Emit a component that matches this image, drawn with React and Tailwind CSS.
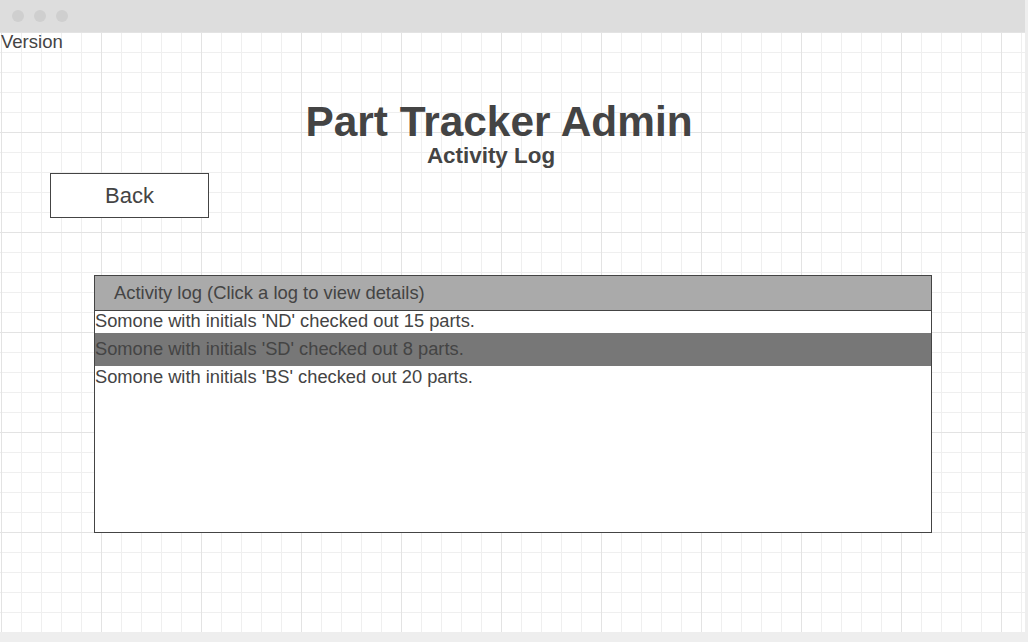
export default function App() {
  const rows = [
    { text: "Somone with initials 'ND' checked out 15 parts.", sel: false, h: "h-[22px] pt-[0px]" },
    { text: "Somone with initials 'SD' checked out 8 parts.", sel: true, h: "h-[33px] pt-[6px]" },
    { text: "Somone with initials 'BS' checked out 20 parts.", sel: false, h: "h-[22px] pt-[1px]" },
  ];
  return (
    <div className="w-[1028px] h-[642px] bg-[#eeeeee] overflow-hidden font-['Liberation_Sans',Arial,sans-serif] text-[#444444]">
      <div className="w-[1025px] h-[32px] bg-[#dddddd] flex items-center gap-[10px] pl-[12px]">
        <div className="w-[12px] h-[12px] rounded-full bg-[#cfcfcf]" />
        <div className="w-[12px] h-[12px] rounded-full bg-[#cfcfcf]" />
        <div className="w-[12px] h-[12px] rounded-full bg-[#cfcfcf]" />
      </div>
      <div className="w-[1025px] h-[600px] bg-white bg-[linear-gradient(to_right,#e3e3e3_1px,transparent_1px),linear-gradient(to_bottom,#e3e3e3_1px,transparent_1px),linear-gradient(to_right,#efefef_1px,transparent_1px),linear-gradient(to_bottom,#efefef_1px,transparent_1px)] [background-size:100px_100px,100px_100px,20px_20px,20px_20px] [background-position:1px_0,0_0,1px_0,0_0] flex flex-col">
        <div className="pl-[1px] pt-[1px] text-[18.5px] leading-[18px] h-[19px]">Version</div>
        <div className="mt-[49px] flex flex-col">
          <div className="text-center w-[998px] text-[42.4px] leading-[44px] font-bold">Part Tracker Admin</div>
          <div className="text-center w-[982px] text-[22.4px] leading-[22px] font-bold mt-[1px]">Activity Log</div>
        </div>
        <div className="ml-[50px] mt-[6px] w-[159px] h-[45px] border border-[#444444] bg-white flex items-center justify-center text-[22px]">
          Back
        </div>
        <div className="ml-[94px] mt-[57px] w-[838px] h-[258px] border border-[#444444] bg-white flex flex-col">
          <div className="h-[35px] bg-[#aaaaaa] border-b border-[#444444] flex items-center pl-[19px] text-[18.4px]">
            Activity log (Click a log to view details)
          </div>
          {rows.map((r, i) => (
            <div
              key={i}
              className={`${r.h} flex items-start text-[18.3px] leading-[20px] ${r.sel ? "bg-[#777777]" : "bg-white"}`}
            >
              {r.text}
            </div>
          ))}
        </div>
      </div>
    </div>
  );
}
